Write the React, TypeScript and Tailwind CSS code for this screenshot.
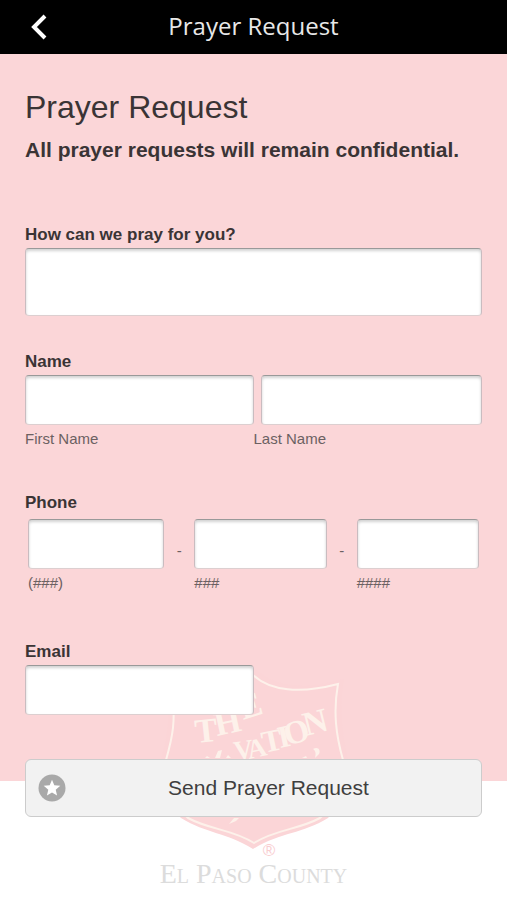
import type { ComponentProps } from "react";

const fieldClass =
  "block w-full rounded-[4px] border border-t-[#999999] border-r-[#c9bcc0] border-b-[#dccfd0] border-l-[#c9bcc0] bg-white px-2 text-base text-[#333333] shadow-[inset_0_2px_3px_rgba(0,0,0,0.18)] outline-none";

const labelClass = "block text-[17px] leading-5 font-bold";
const hintClass = "mt-1 block text-[15px] leading-5 text-[#6b6162]";

function TextField(props: ComponentProps<"input">) {
  return <input type="text" {...props} className={`${fieldClass} h-[50px]`} />;
}

function ShieldLogo() {
  return (
    <svg
      viewBox="154 670 200 190"
      className="h-[190px] w-[200px]"
      role="img"
      aria-label="The Salvation Army"
    >
      <path
        d="M253 667C275 688 305 690 344 679C339 706 342 735 349 764C351 785 342 804 328 818C302 834 281 832 253 849C226 832 207 834 181 818C165 803 158 786 160 764C168 735 172 710 165 679C205 690 233 687 253 667Z"
        fill="#fbd5d7"
      />
      <path
        d="M253 675C270 691 300 694 338 684C333 712 336 735 343 760C347 782 338 803 320 818C298 830 276 829 254 843C232 829 210 830 188 818C171 803 162 782 166 760C172 739 177 720 171 684C205 694 237 691 253 675Z"
        fill="none"
        stroke="#fdf1ea"
        strokeWidth="2"
      />
      <g fill="#fdf1ea" fontFamily="'Liberation Serif', serif" fontWeight="700">
        <text fontSize="34" x="196 217 243" y="743 736 720" rotate="-6 -12 -18">
          THE
        </text>
        <text fontSize="27" x="235 249" y="760 759" rotate="-8 -12">
          VA
        </text>
        <text fontSize="31" x="264 280" y="753 748" rotate="-12">
          TI
        </text>
        <text fontSize="33" x="287" y="746" rotate="-16">
          O
        </text>
        <text fontSize="34" x="306" y="736" rotate="-14">
          N
        </text>
      </g>
      <g fill="#fdf1ea">
        <path d="M205 758l2-2 3 2zM215 758l3-7 4-1-2 8zM226 758l2-3 3 3z" />
        <path d="M302 758l4-2 1 2zM313 749c5-3 8 1 6 5l-4 4c1-4 1-7-2-9z" />
        <path d="M234 818l-5 6 7-3 3-3z" />
      </g>
      <text
        x="269"
        y="856"
        fontSize="17"
        textAnchor="middle"
        fill="#f9cdd0"
        fontFamily="'Liberation Sans', sans-serif"
      >
        ®
      </text>
    </svg>
  );
}

function Backdrop() {
  return (
    <div className="absolute inset-0 -z-10 flex flex-col bg-white">
      <div className="flex-1 bg-[#fbd6d8]" />
      <div className="relative h-[119px]">
        <div className="absolute inset-x-0 bottom-0 flex flex-col items-center">
          <ShieldLogo />
          <p className="h-10 font-['Liberation_Serif',serif] text-[28px] leading-7 text-[#dcdcdc] [font-variant:small-caps]">
            El Paso County
          </p>
        </div>
      </div>
    </div>
  );
}

export default function App() {
  return (
    <div className="relative isolate flex min-h-screen flex-col font-['Liberation_Sans',Arial,sans-serif] text-[#3a3435]">
      <Backdrop />

      <header className="grid h-[54px] grid-cols-[80px_1fr_80px] items-center bg-black">
        <button type="button" aria-label="Back" className="flex h-full items-center pl-[30px]">
          <svg viewBox="0 0 18 26" className="h-[26px] w-[18px]" fill="none" stroke="#ffffff" strokeWidth="4">
            <path d="M15 2L4 13L15 24" />
          </svg>
        </button>
        <span className="pb-0.5 text-center font-['Open_Sans','Noto_Sans',sans-serif] text-2xl text-[#e8e8e8]">
          Prayer Request
        </span>
      </header>

      <main className="px-[25px] pt-[33px] pb-[82px]">
        <h1 className="text-[32px] leading-10">Prayer Request</h1>
        <p className="mt-[11px] text-[21px] leading-6 font-bold">
          All prayer requests will remain confidential.
        </p>

        <form className="mt-[63px]" onSubmit={(e) => e.preventDefault()}>
          <div>
            <label htmlFor="prayer" className={labelClass}>
              How can we pray for you?
            </label>
            <textarea id="prayer" className={`${fieldClass} mt-[3px] h-[68px] resize-none`} />
          </div>

          <div role="group" aria-labelledby="name-label" className="mt-9">
            <span id="name-label" className={labelClass}>
              Name
            </span>
            <div className="mt-[3px] grid grid-cols-2">
              <div>
                <TextField id="first-name" />
                <label htmlFor="first-name" className={hintClass}>
                  First Name
                </label>
              </div>
              <div>
                <div className="pl-[7px]">
                  <TextField id="last-name" />
                </div>
                <label htmlFor="last-name" className={hintClass}>
                  Last Name
                </label>
              </div>
            </div>
          </div>

          <div role="group" aria-labelledby="phone-label" className="mt-11">
            <span id="phone-label" className={labelClass}>
              Phone
            </span>
            <div className="mt-1.5 flex px-[3px]">
              <div className="flex-[136]">
                <TextField id="phone-area" type="tel" />
                <label htmlFor="phone-area" className={hintClass}>
                  (###)
                </label>
              </div>
              <span className="w-[30px] pt-5 text-center text-[15px] leading-6 text-[#6b6162]">-</span>
              <div className="flex-[132]">
                <TextField id="phone-prefix" type="tel" />
                <label htmlFor="phone-prefix" className={hintClass}>
                  ###
                </label>
              </div>
              <span className="w-[30px] pt-5 text-center text-[15px] leading-6 text-[#6b6162]">-</span>
              <div className="flex-[122]">
                <TextField id="phone-line" type="tel" />
                <label htmlFor="phone-line" className={hintClass}>
                  ####
                </label>
              </div>
            </div>
          </div>

          <div className="mt-[49px]">
            <label htmlFor="email" className={labelClass}>
              Email
            </label>
            <div className="mt-[3px] w-1/2">
              <TextField id="email" type="email" />
            </div>
          </div>

          <button
            type="submit"
            className="mt-11 grid h-[58px] w-full grid-cols-[40px_1fr_10px] items-center rounded-[6px] border border-[#cccccc] bg-[#f2f2f2] text-[21px] leading-6 text-[#3f3f3f]"
          >
            <svg viewBox="0 0 28 28" className="ml-3 size-7">
              <circle cx="14" cy="14" r="13.5" fill="#a9a9a9" />
              <path
                d="M14 5.8l2.3 5.5 6 .5-4.6 3.9 1.4 5.8-5.1-3.1-5.1 3.1 1.4-5.8-4.6-3.9 6-.5z"
                fill="#ffffff"
              />
            </svg>
            <span className="text-center">Send Prayer Request</span>
          </button>
        </form>
      </main>
    </div>
  );
}
